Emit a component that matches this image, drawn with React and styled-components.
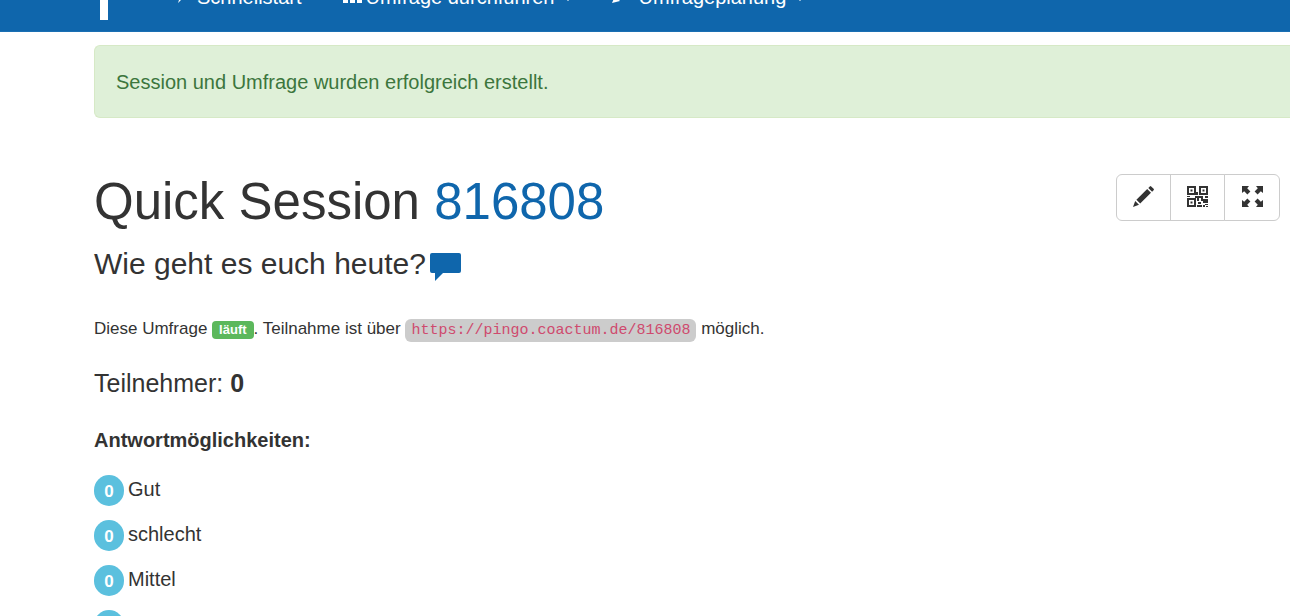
import React from 'react';
import styled, { createGlobalStyle } from 'styled-components';

const GlobalStyle = createGlobalStyle`
  * {
    box-sizing: border-box;
  }

  body {
    margin: 0;
    height: 100vh;
    overflow: hidden;
    background: #fff;
    color: #333;
    font-family: "Liberation Sans", Arial, sans-serif;
    font-size: 20px;
    line-height: 28px;
  }
`;

const Navbar = styled.nav`
  display: flex;
  align-items: flex-end;
  height: 32px;
  padding: 0 100px 20px;
  overflow: hidden;
  background: #0f66ac;
  border-bottom: 1px solid #1a6fb3;
`;

const Brand = styled.a`
  display: flex;
  width: 74px;
  margin-bottom: -9px;
`;

const NavItem = styled.a`
  display: flex;
  align-items: center;
  gap: 4px;
  margin-right: ${({ $gap }) => $gap || 0}px;
  color: #fff;
  text-decoration: none;
  white-space: nowrap;
`;

const Caret = styled.span`
  margin-top: 2px;
  margin-left: 4px;
  border-top: 6px solid #fff;
  border-left: 6px solid transparent;
  border-right: 6px solid transparent;
`;

const Main = styled.main`
  padding: 13px 10px 0 94px;
`;

const Alert = styled.div`
  margin-right: -10px;
  padding: 22px 21px 21px;
  background: #dff0d8;
  border: 1px solid #d6e9c6;
  border-right: 0;
  border-radius: 6px 0 0 6px;
  color: #3c763d;
`;

const TitleRow = styled.div`
  display: flex;
  justify-content: space-between;
  align-items: flex-start;
  margin-top: 56px;
`;

const Title = styled.h1`
  margin: 0;
  font-size: 51px;
  font-weight: 400;
  line-height: 56px;
`;

const SessionLink = styled.a`
  color: #0f66ac;
  text-decoration: none;
`;

const ButtonGroup = styled.div`
  display: flex;
`;

const IconButton = styled.button`
  display: flex;
  align-items: center;
  justify-content: center;
  width: 55px;
  height: 47px;
  padding: 0 0 2px;
  background: #fff;
  border: 1px solid #ccc;
  color: #333;

  & + & {
    margin-left: -1px;
  }

  &:first-child {
    border-radius: 6px 0 0 6px;
  }

  &:last-child {
    width: 56px;
    border-radius: 0 6px 6px 0;
  }
`;

const Question = styled.h3`
  display: flex;
  align-items: center;
  gap: 4px;
  margin: 17px 0 0;
  font-size: 30px;
  font-weight: 400;
  line-height: 34px;

  svg {
    margin-top: 6px;
  }
`;

const Status = styled.p`
  margin: 36px 0 0;
  font-size: 17px;
  line-height: 24px;
`;

const Label = styled.span`
  display: inline-block;
  padding: 0 7px;
  background: #5cb85c;
  border-radius: 4px;
  color: #fff;
  font-size: 13px;
  font-weight: 700;
  line-height: 18px;
`;

const Code = styled.code`
  padding: 3px 6px;
  background: #ccc;
  border-radius: 6px;
  color: #cf4a6e;
  font-family: "Liberation Mono", "Courier New", monospace;
  font-size: 15px;
`;

const Participants = styled.h4`
  margin: 26px 0 0;
  font-size: 25px;
  font-weight: 400;
  line-height: 28px;
`;

const AnswersTitle = styled.p`
  margin: 29px 0 0;
  font-weight: 700;
`;

const Answers = styled.ul`
  display: flex;
  flex-direction: column;
  gap: 14px;
  margin: 21px 0 0;
  padding: 0;
  list-style: none;
`;

const Answer = styled.li`
  display: flex;
  gap: 4px;
`;

const Badge = styled.span`
  width: 30px;
  height: 31px;
  padding-top: 1px;
  background: #5bc0de;
  border-radius: 15px;
  color: #fff;
  font-size: 17px;
  font-weight: 700;
  line-height: 31px;
  text-align: center;
`;

const answers = ['Gut', 'schlecht', 'Mittel', 'Keine Angabe'];

const LogoIcon = () => (
  <svg width="26" height="40" viewBox="0 0 26 40" fill="#fff" aria-hidden="true">
    <path d="M0 0h8v40H0z" />
    <path d="M8 0h6c7 0 12 3 12 9s-5 9-12 9H8v-5h5c4 0 6-1 6-4s-2-4-6-4H8z" />
  </svg>
);

const FlashIcon = () => (
  <svg width="19" height="20" viewBox="0 3 19 20" fill="#fff" aria-hidden="true">
    <path d="M7 0h8l-4 7h5L4 19l3-9H2z" />
  </svg>
);

const StatsIcon = () => (
  <svg width="19" height="20" viewBox="0 3 19 20" fill="#fff" aria-hidden="true">
    <path d="M0 13h5v6H0zM7 7h5v12H7zM14 1h5v18h-5z" />
  </svg>
);

const PlanIcon = () => (
  <svg width="22" height="20" viewBox="0 3 22 20" fill="#fff" aria-hidden="true">
    <path d="M0 19l3-7 5 5zM4 11L15 0l5 5L9 16z" />
  </svg>
);

const PencilIcon = () => (
  <svg width="21" height="21" viewBox="0 0 21 21" fill="currentColor" aria-hidden="true">
    <path d="M0 21l2.2-6 3.8 3.8zM3.4 13.8L14.2 3l3.8 3.8L7.2 17.6zM15.3 1.9L16.8.4q.7-.7 1.4 0L20.6 2.8q.7.7 0 1.4L19.1 5.7z" />
  </svg>
);

const QrIcon = () => (
  <svg width="21" height="21" viewBox="0 0 21 21" fill="currentColor" aria-hidden="true">
    <path
      fillRule="evenodd"
      d="M0 0h9v9H0zM2 2v5h5V2zM12 0h9v9h-9zM14 2v5h5V2zM0 12h9v9H0zM2 14v5h5v-5z"
    />
    <path d="M3.5 3.5h2v2h-2zM15.5 3.5h2v2h-2zM3.5 15.5h2v2h-2zM9 6h2v3H9zM8 10h6v2h-2v3h-2v-3H8zM14 10h2v3h5v4h-5v-2h-2zM11 16h3v2h-3zM10 19h5v2h-5zM16 19h2v2h-2zM18 18h3v1h-3zM19 20h2v1h-2zM0 10h3v1H0zM18 10h3v2h-3z" />
  </svg>
);

const FullscreenIcon = () => (
  <svg width="21" height="21" viewBox="0 0 21 21" fill="currentColor" aria-hidden="true">
    <path d="M0 0h7L5.2 2.2 8.4 5.4 5.4 8.4 2.2 5.2 0 7z" />
    <path d="M21 0h-7l1.8 2.2-3.2 3.2 3 3 3.2-3.2L21 7z" />
    <path d="M0 21h7l-1.8-2.2 3.2-3.2-3-3-3.2 3.2L0 14z" />
    <path d="M21 21h-7l1.8-2.2-3.2-3.2 3-3 3.2 3.2L21 14z" />
  </svg>
);

const CommentIcon = () => (
  <svg width="31" height="28" viewBox="0 0 31 28" fill="#0f66ac" aria-hidden="true">
    <path d="M2 0h27q2 0 2 2v16q0 2-2 2H13l-8 8v-8H2q-2 0-2-2V2q0-2 2-2z" />
  </svg>
);

function App() {
  return (
    <>
      <GlobalStyle />
      <Navbar>
        <Brand href="#" aria-label="PINGO">
          <LogoIcon />
        </Brand>
        <NavItem href="#" $gap={41}>
          <FlashIcon />
          Schnellstart
        </NavItem>
        <NavItem href="#" $gap={38}>
          <StatsIcon />
          Umfrage durchführen
          <Caret />
        </NavItem>
        <NavItem href="#">
          <PlanIcon />
          Umfrageplanung
          <Caret />
        </NavItem>
      </Navbar>
      <Main>
        <Alert role="alert">Session und Umfrage wurden erfolgreich erstellt.</Alert>
        <TitleRow>
          <Title>
            Quick Session <SessionLink href="#">816808</SessionLink>
          </Title>
          <ButtonGroup>
            <IconButton aria-label="Bearbeiten">
              <PencilIcon />
            </IconButton>
            <IconButton aria-label="QR-Code">
              <QrIcon />
            </IconButton>
            <IconButton aria-label="Vollbild">
              <FullscreenIcon />
            </IconButton>
          </ButtonGroup>
        </TitleRow>
        <Question>
          Wie geht es euch heute?
          <CommentIcon />
        </Question>
        <Status>
          Diese Umfrage <Label>läuft</Label>. Teilnahme ist über{' '}
          <Code>https://pingo.coactum.de/816808</Code> möglich.
        </Status>
        <Participants>
          Teilnehmer: <strong>0</strong>
        </Participants>
        <AnswersTitle>Antwortmöglichkeiten:</AnswersTitle>
        <Answers>
          {answers.map((answer) => (
            <Answer key={answer}>
              <Badge>0</Badge>
              {answer}
            </Answer>
          ))}
        </Answers>
      </Main>
    </>
  );
}

export default App;
